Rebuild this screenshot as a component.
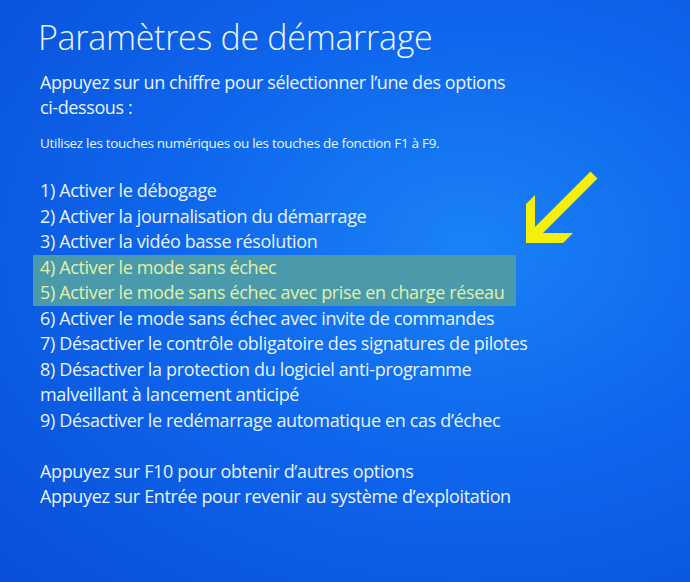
const options = [
  "1) Activer le débogage",
  "2) Activer la journalisation du démarrage",
  "3) Activer la vidéo basse résolution",
]

const highlighted = [
  "4) Activer le mode sans échec",
  "5) Activer le mode sans échec avec prise en charge réseau",
]

const rest = [
  "6) Activer le mode sans échec avec invite de commandes",
  "7) Désactiver le contrôle obligatoire des signatures de pilotes",
  "8) Désactiver la protection du logiciel anti-programme",
  "malveillant à lancement anticipé",
  "9) Désactiver le redémarrage automatique en cas d’échec",
]

function Arrow() {
  return (
    <svg
      className="absolute left-0 top-0 pointer-events-none"
      width="690"
      height="582"
      viewBox="0 0 690 582"
    >
      <polygon
        fill="#f4ef0c"
        points="526,243 526,204 535,195 535,227 590.5,171.5 597.5,178.5 543,233 573,233 563,243"
      />
    </svg>
  )
}

export default function App() {
  return (
    <div
      className="relative w-[690px] h-[582px] overflow-hidden bg-[radial-gradient(ellipse_at_68%_42%,#1a82f6_0%,#0e66ec_45%,#0a4ed8_100%)] text-[#e8f4ff] pl-[40px]"
      style={{ fontFamily: '"Open Sans", "Noto Sans", sans-serif' }}
    >
      <h1 className="mt-[15px] -ml-[2px] text-[34px] leading-[44px] font-light tracking-[-0.3px]">
        Paramètres de démarrage
      </h1>

      <p className="mt-[11px] text-[18px] leading-[25px] tracking-[-0.4px]">
        Appuyez sur un chiffre pour sélectionner l’une des options
        <br />
        ci-dessous :
      </p>

      <p className="mt-[13px] text-[13.5px] leading-[20px] tracking-[-0.3px]">
        Utilisez les touches numériques ou les touches de fonction F1 à F9.
      </p>

      <ul className="mt-[25px] text-[18px] leading-[25.5px] tracking-[-0.35px]">
        {options.map((o) => (
          <li key={o}>{o}</li>
        ))}
        <li className="-ml-[7px] pl-[7px] w-[483px] bg-[#4b9aab] text-[#e2f1a6]">
          {highlighted.map((o) => (
            <div key={o}>{o}</div>
          ))}
        </li>
        {rest.map((o) => (
          <li key={o}>{o}</li>
        ))}
      </ul>

      <div className="mt-[26px] text-[18px] leading-[25px] tracking-[-0.35px]">
        <p>Appuyez sur F10 pour obtenir d’autres options</p>
        <p>Appuyez sur Entrée pour revenir au système d’exploitation</p>
      </div>

      <Arrow />
    </div>
  )
}
